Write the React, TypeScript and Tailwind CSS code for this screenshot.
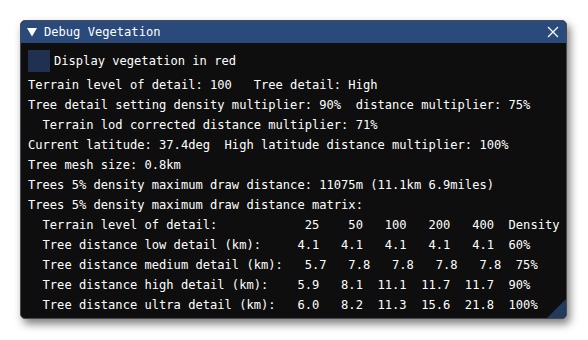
import React from "react";

const font = { fontFamily: '"DejaVu Sans Mono", "Liberation Mono", monospace' };

function row(label: string, vals: string[], dens: string) {
  return "  " + label.padEnd(32, " ") + vals.map((v) => v.padStart(6, " ")).join("") + "  " + dens;
}

const lines: string[] = [
  "Terrain level of detail: 100   Tree detail: High",
  "Tree detail setting density multiplier: 90%  distance multiplier: 75%",
  "  Terrain lod corrected distance multiplier: 71%",
  "Current latitude: 37.4deg  High latitude distance multiplier: 100%",
  "Tree mesh size: 0.8km",
  "Trees 5% density maximum draw distance: 11075m (11.1km 6.9miles)",
  "Trees 5% density maximum draw distance matrix:",
  row("Terrain level of detail:", ["25", "50", "100", "200", "400"], "Density"),
  row("Tree distance low detail (km):", ["4.1", "4.1", "4.1", "4.1", "4.1"], "60%"),
  row("Tree distance medium detail (km):", ["5.7", "7.8", "7.8", "7.8", "7.8"], "75%"),
  row("Tree distance high detail (km):", ["5.9", "8.1", "11.1", "11.7", "11.7"], "90%"),
  row("Tree distance ultra detail (km):", ["6.0", "8.2", "11.3", "15.6", "21.8"], "100%"),
];

export default function App() {
  return (
    <div className="w-[588px] h-[340px] bg-white pt-[20px] pl-[20px]" style={font}>
      <div className="relative w-[547px] h-[299px] rounded-[5px] border border-[#4a4a52] bg-[#0e0e0e] overflow-hidden shadow-[3px_5px_9px_rgba(0,0,0,0.5)] text-white text-[12.1px]">
        <div className="h-[22px] bg-[#294a7a] flex items-center pl-[6px] pr-[6px]">
          <svg width="10" height="9" viewBox="0 0 10 9" className="mr-[7px]">
            <polygon points="0,0 10,0 5,8.5" fill="#ffffff" />
          </svg>
          <span className="leading-[22px] whitespace-pre">Debug Vegetation</span>
          <div className="flex-1" />
          <svg width="12" height="12" viewBox="0 0 12 12" className="mr-[1px]">
            <path d="M1 1 L11 11 M11 1 L1 11" stroke="#ffffff" strokeWidth="1.3" fill="none" />
          </svg>
        </div>
        <div className="pl-[7px] pt-[7px]">
          <div className="flex items-center h-[22px]">
            <div className="w-[22px] h-[22px] bg-[#1f3050]" />
            <span className="ml-[4px] whitespace-pre leading-[22px]">Display vegetation in red</span>
          </div>
          <div className="mt-[3px]">
            {lines.map((l, i) => (
              <div key={i} className="whitespace-pre leading-[20px] h-[20px]">
                {l}
              </div>
            ))}
          </div>
        </div>
        <svg width="19" height="19" viewBox="0 0 19 19" className="absolute right-0 bottom-0">
          <polygon points="19,0 19,19 0,19" fill="#213a5e" />
        </svg>
      </div>
    </div>
  );
}
